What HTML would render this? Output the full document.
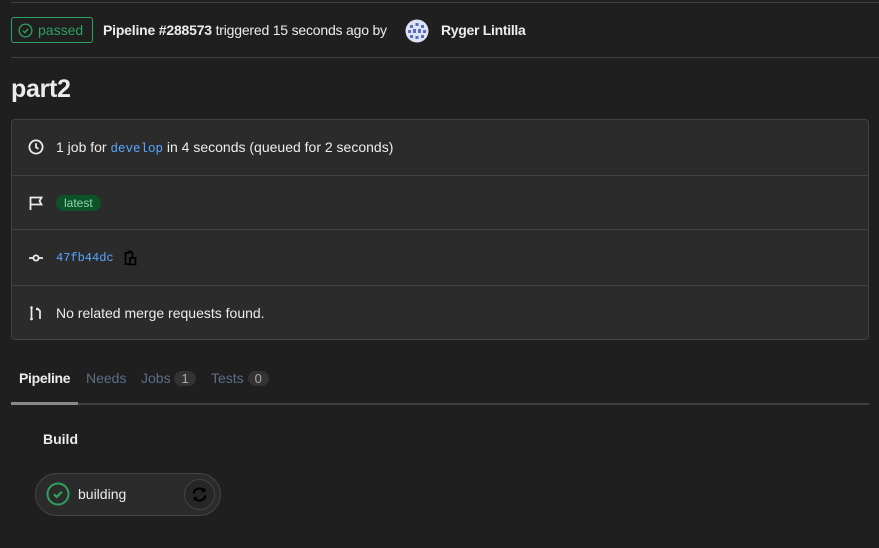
<!DOCTYPE html>
<html><head><meta charset="utf-8"><style>
*{box-sizing:border-box;margin:0;padding:0}
body{width:879px;height:548px;background:#1f1f1f;color:#ececec;font-family:"Liberation Sans",sans-serif;font-size:14px;position:relative;overflow:hidden}
.abs{position:absolute}
.mono{font-family:"Liberation Mono",monospace;color:#58a6ff;font-size:12.5px}
.row{position:absolute;left:0;right:0;display:flex;align-items:center;padding-left:16px;border-top:1px solid #424242}
.row svg{margin-right:12px}
</style></head><body>
<div class="abs" style="left:11px;right:0;top:2px;height:1px;background:#404040"></div>
<div class="abs" style="left:11px;top:17px;width:82px;height:26px;border:1px solid #2da160;border-radius:3px;color:#2da160;display:flex;align-items:center;padding-left:6px;font-size:14px">
<svg width="15" height="15" viewBox="0 0 16 16" style="margin-right:5px"><circle cx="8" cy="8" r="6.8" fill="none" stroke="#2da160" stroke-width="1.4"/><path d="M5.2 8.2l2 2 3.6-3.8" fill="none" stroke="#2da160" stroke-width="1.5"/></svg>passed</div>
<div class="abs" style="left:103px;top:22px;font-size:14px;letter-spacing:-0.2px"><b>Pipeline #288573</b> triggered 15 seconds ago by</div>
<svg class="abs" style="left:405px;top:19px" width="24" height="24" viewBox="0 0 24 24"><circle cx="12" cy="12" r="11.5" fill="#dde3f5"/><g fill="#5a6fc0"><rect x="5" y="6" width="3" height="3"/><rect x="10.5" y="4" width="3" height="3"/><rect x="16" y="6" width="3" height="3"/><rect x="3" y="11" width="3" height="3"/><rect x="8" y="10" width="3" height="4"/><rect x="13" y="10" width="3" height="4"/><rect x="18" y="11" width="3" height="3"/><rect x="5" y="16" width="3" height="3"/><rect x="10.5" y="17" width="3" height="3"/><rect x="16" y="16" width="3" height="3"/></g></svg>
<div class="abs" style="left:441px;top:22px;font-weight:bold;letter-spacing:-0.3px">Ryger Lintilla</div>
<div class="abs" style="left:11px;right:0;top:57px;height:1px;background:#404040"></div>
<div class="abs" style="left:11px;top:75px;font-size:25px;font-weight:bold;letter-spacing:-0.3px">part2</div>
<div class="abs" style="left:11px;top:119px;width:858px;height:221px;background:#2b2b2b;border:1px solid #424242;border-radius:4px">
<div class="row" style="top:-1px;height:56px;border-top:none">
<svg width="16" height="16" viewBox="0 0 16 16"><circle cx="8" cy="8" r="6.6" fill="none" stroke="#ececec" stroke-width="1.8"/><path d="M8 4.2V8.3l2.4 1.6" fill="none" stroke="#ececec" stroke-width="1.8"/></svg>
<span>1 job for <span class="mono">develop</span> in 4 seconds (queued for 2 seconds)</span></div>
<div class="row" style="top:55px;height:54px">
<svg width="16" height="16" viewBox="0 0 16 16"><path d="M2.5 15V2.5h11l-2 3.5 2 3.5h-11" fill="none" stroke="#ececec" stroke-width="1.8"/></svg>
<span style="background:#0d532a;color:#91d4a8;border-radius:9px;padding:1px 8px;font-size:12px">latest</span></div>
<div class="row" style="top:109px;height:56px">
<svg width="16" height="16" viewBox="0 0 16 16"><circle cx="8" cy="8" r="2.6" fill="none" stroke="#ececec" stroke-width="1.8"/><path d="M1 8h4.4M10.6 8H15" stroke="#ececec" stroke-width="1.8"/></svg>
<span class="mono" style="font-size:12px">47fb44dc</span>
<svg style="margin-left:10px" width="13" height="16" viewBox="0 0 13 16"><path d="M1.5 3h3V1.5h3V3h1v11h-7z" fill="none" stroke="#000" stroke-width="1.7"/><rect x="6" y="8" width="5.5" height="6.5" fill="#2b2b2b" stroke="#000" stroke-width="1.7"/></svg></div>
<div class="row" style="top:165px;height:55px">
<svg width="16" height="16" viewBox="0 0 16 16"><path d="M3.5 3v10M12 14V6L9 3" fill="none" stroke="#ececec" stroke-width="1.7"/><path d="M8 2.5l2 2.5-2 .3z" fill="#ececec"/><circle cx="3.5" cy="14" r="1.4" fill="#ececec"/><circle cx="3.5" cy="2.5" r="1.3" fill="#ececec"/></svg>
<span>No related merge requests found.</span></div>
</div>
<div class="abs" style="left:19px;top:370px;font-weight:bold;font-size:14px;letter-spacing:-0.3px">Pipeline</div>
<div class="abs" style="left:86px;top:370px;color:#5f6e86">Needs</div>
<div class="abs" style="left:141px;top:370px;color:#5f6e86">Jobs <span style="display:inline-block;background:#333;color:#aaa;border-radius:8px;padding:0 7px;font-size:13px">1</span></div>
<div class="abs" style="left:211px;top:370px;color:#5f6e86">Tests <span style="display:inline-block;background:#333;color:#aaa;border-radius:8px;padding:0 7px;font-size:13px">0</span></div>
<div class="abs" style="left:11px;width:858px;top:403px;height:2px;background:#404040"></div>
<div class="abs" style="left:11px;width:67px;top:402px;height:3px;background:#888"></div>
<div class="abs" style="left:43px;top:431px;font-weight:bold">Build</div>
<div class="abs" style="left:35px;top:473px;width:186px;height:43px;background:#2b2b2b;border:1px solid #444;border-radius:22px"></div>
<svg class="abs" style="left:46px;top:482px" width="24" height="24" viewBox="0 0 24 24"><circle cx="12" cy="12" r="10.5" fill="none" stroke="#2da160" stroke-width="2"/><path d="M8 12.3l2.8 2.6 5-5.2" fill="none" stroke="#2da160" stroke-width="2.2"/></svg>
<div class="abs" style="left:78px;top:486px;font-size:14px">building</div>
<div class="abs" style="left:184px;top:479px;width:31px;height:31px;border:1px solid #444;border-radius:50%;background:#262626"></div>
<svg class="abs" style="left:191px;top:486px" width="17" height="17" viewBox="0 0 16 16"><path d="M2.5 7a5.5 5.5 0 0 1 9.8-2.5M13.5 9a5.5 5.5 0 0 1-9.8 2.5" fill="none" stroke="#000" stroke-width="2"/><path d="M13.5 1.5v4.3H9.2zM2.5 14.5v-4.3h4.3z" fill="#000"/></svg>
</body></html>
